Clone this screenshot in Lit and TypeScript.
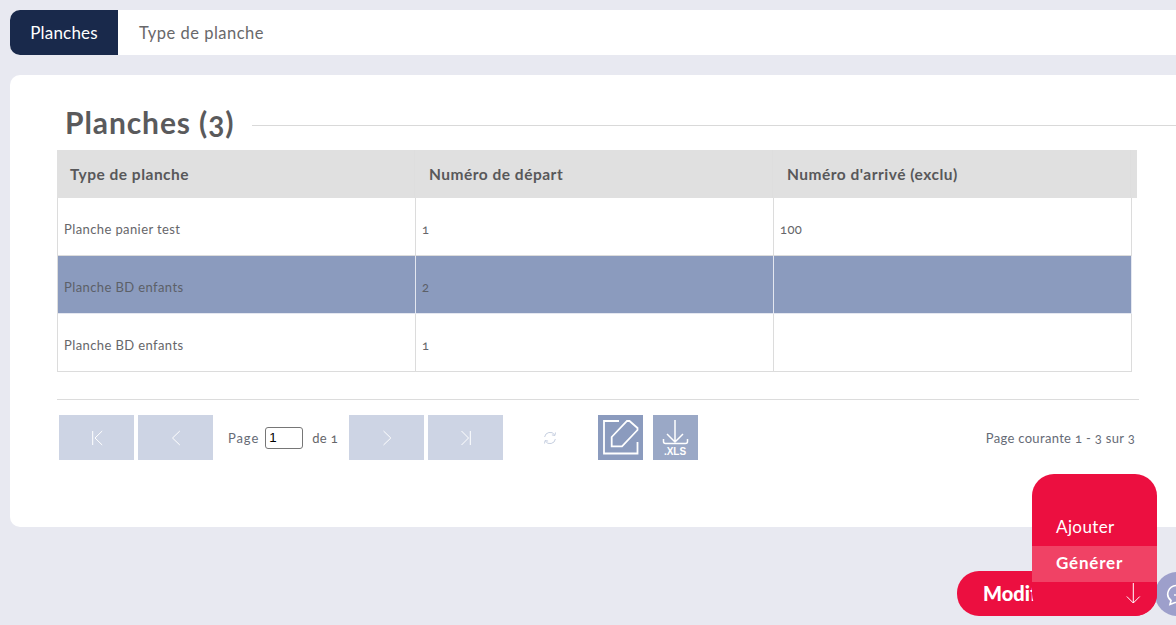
import { LitElement, html, css, svg } from "lit";
import { customElement } from "lit/decorators.js";

const rows = [
  { type: "Planche panier test", start: "1", end: "100", selected: false },
  { type: "Planche BD enfants", start: "2", end: "", selected: true },
  { type: "Planche BD enfants", start: "1", end: "", selected: false },
];

const stroke = (d: string) => svg`<path d=${d} fill="none" stroke="currentColor" stroke-width="1"/>`;

@customElement("app-root")
export class AppRoot extends LitElement {
  static styles = css`
    :host {
      display: block;
      position: relative;
      width: 1176px;
      height: 625px;
      overflow: hidden;
      background: #e8e9f1;
      font-family: Lato, "Noto Sans", sans-serif;
      font-feature-settings: "onum";
      color: #58585a;
    }
    .page { display: flex; flex-direction: column; width: 1196px; padding: 10px 0 0 10px; box-sizing: border-box; }
    .tabs { display: flex; height: 45px; background: #fff; border-radius: 10px; align-items: stretch; }
    .tab { display: flex; align-items: center; font-size: 16.5px; }
    .tab.active { width: 108px; justify-content: center; background: #19294b; color: #fff; border-radius: 10px 0 0 10px; font-size: 17px; letter-spacing: 0.2px; }
    .tab.other { padding-left: 21px; letter-spacing: 0.5px; color: #68686a; }
    .card { margin-top: 20px; height: 452px; background: #fff; border-radius: 10px; padding: 30px 0 0 47px; box-sizing: border-box; }
    .title { display: flex; align-items: center; height: 35px; padding: 0 0 0 8px; margin-bottom: 10px; }
    .title h1 { margin: 0; font-size: 30px; font-weight: 700; color: #5a5a5c; line-height: 35px; letter-spacing: 0.9px; white-space: nowrap; }
    .title i { flex: 1; height: 1px; margin: 5px 0 0 18px; background: #d9d9d9; }
    .head { display: grid; grid-template-columns: 358px 358px 358px 6px; width: 1080px; height: 48px; background: #e0e0e0; font-weight: 700; font-size: 15.5px; letter-spacing: 0.5px; }
    .head span { display: flex; align-items: center; padding-left: 13px; border-right: 1px solid #dedede; box-sizing: border-box; }
    .head span + span { padding-left: 14px; }
    .head span:last-child { border: 0; padding: 0; }
    .body { width: 1075px; border: solid #dcdcdc; border-width: 0 0 1px 1px; box-sizing: border-box; }
    .row { display: grid; grid-template-columns: 358px 358px 358px; height: 58px; border-bottom: 1px solid #dcdcdc; box-sizing: border-box; font-size: 13px; letter-spacing: 0.4px; color: #66666a; }
    .row:last-child { border-bottom: 0; height: 57px; }
    .row.sel { background: #8b9bbe; border-bottom-color: #e4e7f0; color: #5c6068; }
    .cell { display: flex; align-items: center; padding: 4px 0 0 6px; border-right: 1px solid #dcdcdc; box-sizing: border-box; }
    .row.sel .cell { border-right-color: #e4e7f0; }
    .sep { width: 1082px; height: 1px; margin-top: 27px; background: #dcdcdc; }
    .pager { display: flex; align-items: center; width: 1076px; height: 45px; margin: 15px 0 0 2px; font-size: 13px; }
    .nav { display: flex; align-items: center; justify-content: center; width: 75px; height: 45px; background: #cdd4e4; color: #fff; }
    .nav + .nav { margin-left: 4px; }
    .page-label { margin-left: 15px; letter-spacing: 0.9px; color: #666b76; }
    .page-input { width: 38px; height: 22px; margin-left: 6px; padding: 0 3px; box-sizing: border-box; border: 1px solid #767676; border-radius: 3px; font: 13.3px "Liberation Sans", sans-serif; color: #000; background: #fff; }
    .of { margin: 0 11px 0 9px; letter-spacing: 0.4px; color: #66666a; }
    .refresh { display: flex; margin: 0 40px 0 39px; color: #bfc9dc; }
    .tool { display: flex; width: 45px; height: 45px; color: #fff; background: #8b9bbe; }
    .tool.xls { margin-left: 10px; background: #9aa8c6; }
    .status { margin-left: auto; letter-spacing: 0.32px; color: #666b76; white-space: nowrap; }
    .fab { position: absolute; left: 957px; top: 571px; width: 200px; height: 45px; border-radius: 22px; background: #ec0f40; color: #fff; font-size: 20px; font-weight: 900; line-height: 45px; text-indent: 26px; }
    .fab-menu { position: absolute; left: 1032px; top: 474px; width: 125px; height: 142px; border-radius: 22px; background: #ec0f40; color: #fff; padding-top: 35px; box-sizing: border-box; font-size: 17px; }
    .fab-menu div { height: 36px; line-height: 36px; padding-left: 24px; letter-spacing: 0.4px; }
    .fab-menu .on { margin-top: 1px; line-height: 34px; background: #f04265; font-weight: 700; letter-spacing: 0.8px; }
    .fab-menu svg { position: absolute; left: 93px; top: 108px; }
    .chat { position: absolute; left: 1155px; top: 572px; width: 44px; height: 44px; border-radius: 50%; background: #9d9fcb; color: #fff; }
    .chat svg { position: absolute; left: 10px; top: 11px; }
    svg { display: block; }
  `;

  private navIcon(d: string) {
    return html`<div class="nav"><svg width="16" height="16" viewBox="0 0 16 16">${stroke(d)}</svg></div>`;
  }

  render() {
    return html`
      <div class="page">
        <nav class="tabs">
          <div class="tab active">Planches</div>
          <div class="tab other">Type de planche</div>
        </nav>
        <section class="card">
          <div class="title"><h1>Planches (3)</h1><i></i></div>
          <div class="head">
            <span>Type de planche</span><span>Numéro de départ</span><span>Numéro d'arrivé (exclu)</span><span></span>
          </div>
          <div class="body">
            ${rows.map(
              (r) => html`<div class="row ${r.selected ? "sel" : ""}">
                <div class="cell">${r.type}</div>
                <div class="cell">${r.start}</div>
                <div class="cell">${r.end}</div>
              </div>`
            )}
          </div>
          <div class="sep"></div>
          <div class="pager">
            ${this.navIcon("M3.700 1v14M13.200 1L6 8l7.200 7")}
            ${this.navIcon("M11.800 1L4.500 8l7.300 7")}
            <span class="page-label">Page</span>
            <input class="page-input" .value=${"1"} />
            <span class="of">de 1</span>
            ${this.navIcon("M4.500 1l7.300 7-7.300 7")}
            ${this.navIcon("M12.300 1v14M3.500 1l7 7-7 7")}
            <span class="refresh">
              <svg width="16" height="16" viewBox="0 0 16 16" fill="none" stroke="currentColor" stroke-width="0.9">
                <path d="M2.600 7A5.500 5.500 0 0 1 12.600 4.800M13.400 9A5.500 5.500 0 0 1 3.400 11.200"/>
                <path d="M13.500 2.500l-.6 3-3-.6M2.500 13.500l.6-3 3 .6"/>
              </svg>
            </span>
            <div class="tool">
              <svg width="45" height="45" viewBox="0 0 45 45" fill="none" stroke="currentColor" stroke-width="1.800">
                <path d="M21 6H6v32.500h33.500V27"/>
                <path d="M13.700 31.300V22L29 6h2.500l8 7v2L24 31.300z"/>
              </svg>
            </div>
            <div class="tool xls">
              <svg width="45" height="45" viewBox="0 0 45 45" fill="none" stroke="currentColor">
                <path d="M22 5v22M14 19l8 8 8-8" stroke-width="1.500"/>
                <path d="M10.500 24v2.500a2 2 0 0 0 2 2h20a2 2 0 0 0 2-2V24" stroke-width="1.500"/>
                <text x="22" y="40" text-anchor="middle" fill="currentColor" stroke="none" font-size="10" font-weight="700" font-family="Liberation Sans, sans-serif">.XLS</text>
              </svg>
            </div>
            <span class="status">Page courante 1 - 3 sur 3</span>
          </div>
        </section>
      </div>
      <div class="chat">
        <svg width="24" height="24" viewBox="0 0 24 24" fill="none" stroke="currentColor" stroke-width="1.600">
          <path d="M12 2.500a9 8.500 0 0 0-6 15l-1 4 5-2a9 8.500 0 1 0 2-17z"/>
          <circle cx="10" cy="12" r="0.900" fill="currentColor" stroke="none"/>
        </svg>
      </div>
      <div class="fab">Modifier</div>
      <div class="fab-menu">
        <div>Ajouter</div>
        <div class="on">Générer</div>
        <svg width="16" height="24" viewBox="0 0 16 24" fill="none" stroke="currentColor" stroke-width="1"><path d="M8.300 1v20M1.800 14.500L8.300 21l6.500-6.500"/></svg>
      </div>
    `;
  }
}
